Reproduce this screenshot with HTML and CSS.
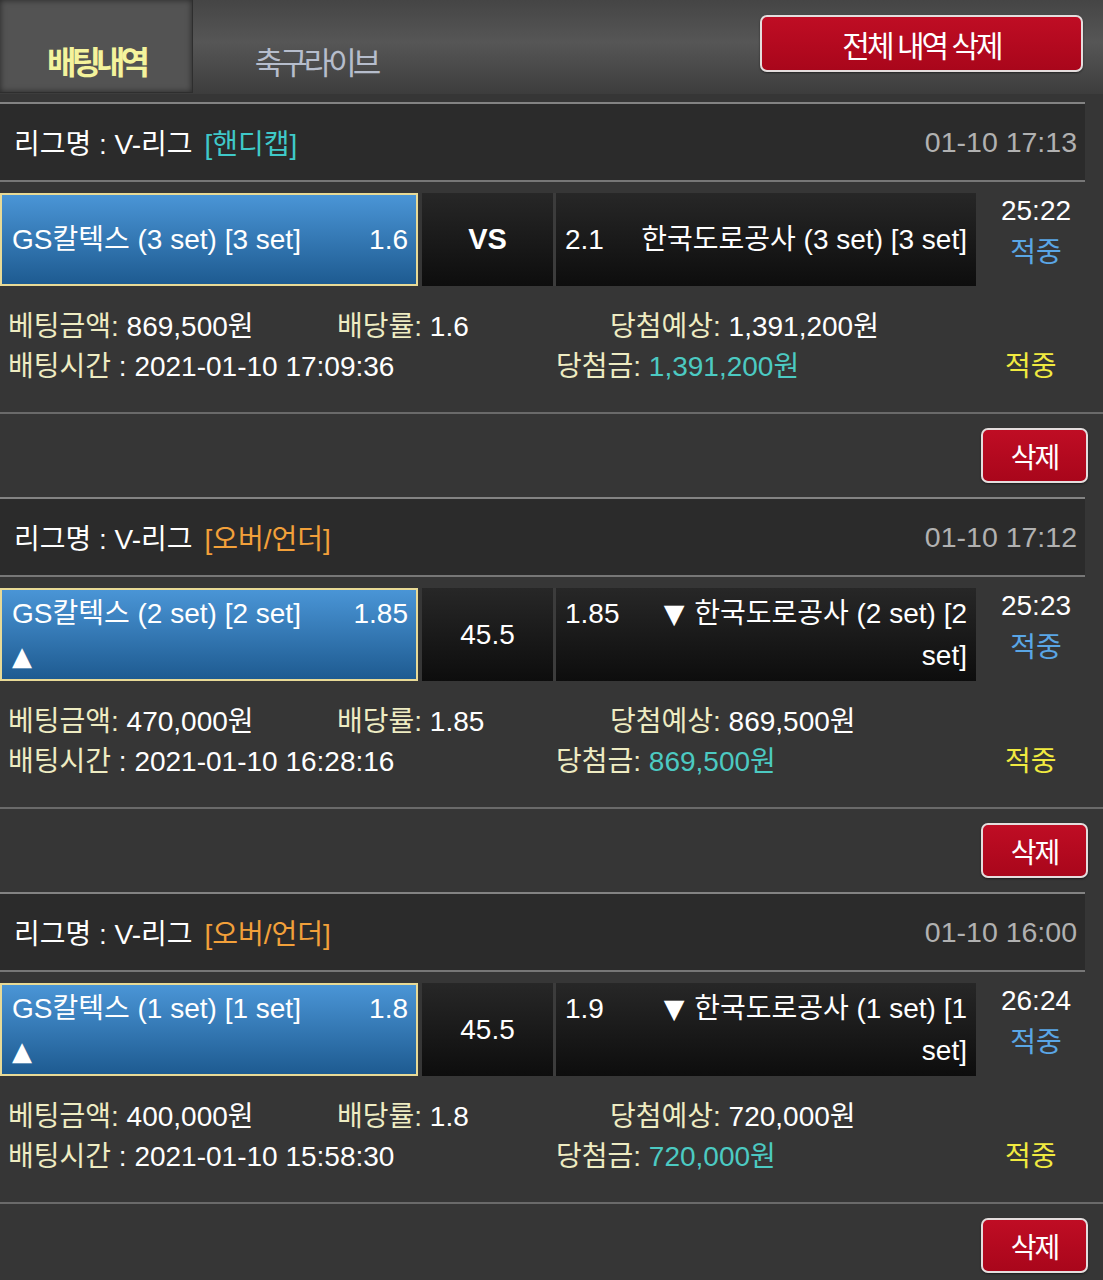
FILE: index.html
```html
<!DOCTYPE html>
<html>
<head lang="ko">
    <meta charset="UTF-8">
    <title>배팅내역</title>
    <link rel="stylesheet" href="styles.css">
</head>
<body>

<div class="top-bar">
    <div class="tabs">
        <a href="javascript:void(0);" class="tab tab-on">배팅내역</a>
        <a href="javascript:void(0);" class="tab">축구라이브</a>
    </div>
    <a href="javascript:void(0);" class="btn-red btn-all">전체 내역 삭제</a>
</div>

<!-- 1 -->
<div class="bet">
    <div class="bet-head">
        <span class="league">리그명 : V-리그 <em class="tag tag-handi">[핸디캡]</em></span>
        <span class="date">01-10 17:13</span>
    </div>
    <div class="match">
        <div class="home">
            <div class="cell-text"><span class="odds">1.6</span>GS칼텍스 (3 set) [3 set]</div>
        </div>
        <div class="mid mid-vs">VS</div>
        <div class="away">
            <div class="cell-text"><span class="odds">2.1</span>한국도로공사 (3 set) [3 set]</div>
        </div>
        <div class="state">
            <div>25:22</div>
            <div class="hit-blue">적중</div>
        </div>
    </div>
    <div class="info">
        <div class="info-row row-a">
            <div><span class="lbl">베팅금액:</span> 869,500원</div>
            <div><span class="lbl">배당률:</span> 1.6</div>
            <div><span class="lbl">당첨예상:</span> 1,391,200원</div>
        </div>
        <div class="info-row row-b">
            <div><span class="lbl">배팅시간</span> : 2021-01-10 17:09:36</div>
            <div><span class="lbl">당첨금:</span> <span class="win">1,391,200원</span></div>
            <div class="hit-yellow">적중</div>
        </div>
    </div>
    <div class="bet-foot">
        <a href="javascript:void(0);" class="btn-red btn-del">삭제</a>
    </div>
</div>

<!-- 2 -->
<div class="bet">
    <div class="bet-head">
        <span class="league">리그명 : V-리그 <em class="tag tag-ou">[오버/언더]</em></span>
        <span class="date">01-10 17:12</span>
    </div>
    <div class="match">
        <div class="home">
            <div class="cell-text"><span class="odds">1.85</span>GS칼텍스 (2 set) [2 set]<span class="arrow">▲</span></div>
        </div>
        <div class="mid">45.5</div>
        <div class="away">
            <div class="cell-text"><span class="odds">1.85</span><span class="arrow-in">▼</span> 한국도로공사 (2 set) [2 set]</div>
        </div>
        <div class="state">
            <div>25:23</div>
            <div class="hit-blue">적중</div>
        </div>
    </div>
    <div class="info">
        <div class="info-row row-a">
            <div><span class="lbl">베팅금액:</span> 470,000원</div>
            <div><span class="lbl">배당률:</span> 1.85</div>
            <div><span class="lbl">당첨예상:</span> 869,500원</div>
        </div>
        <div class="info-row row-b">
            <div><span class="lbl">배팅시간</span> : 2021-01-10 16:28:16</div>
            <div><span class="lbl">당첨금:</span> <span class="win">869,500원</span></div>
            <div class="hit-yellow">적중</div>
        </div>
    </div>
    <div class="bet-foot">
        <a href="javascript:void(0);" class="btn-red btn-del">삭제</a>
    </div>
</div>

<!-- 3 -->
<div class="bet">
    <div class="bet-head">
        <span class="league">리그명 : V-리그 <em class="tag tag-ou">[오버/언더]</em></span>
        <span class="date">01-10 16:00</span>
    </div>
    <div class="match">
        <div class="home">
            <div class="cell-text"><span class="odds">1.8</span>GS칼텍스 (1 set) [1 set]<span class="arrow">▲</span></div>
        </div>
        <div class="mid">45.5</div>
        <div class="away">
            <div class="cell-text"><span class="odds">1.9</span><span class="arrow-in">▼</span> 한국도로공사 (1 set) [1 set]</div>
        </div>
        <div class="state">
            <div>26:24</div>
            <div class="hit-blue">적중</div>
        </div>
    </div>
    <div class="info">
        <div class="info-row row-a">
            <div><span class="lbl">베팅금액:</span> 400,000원</div>
            <div><span class="lbl">배당률:</span> 1.8</div>
            <div><span class="lbl">당첨예상:</span> 720,000원</div>
        </div>
        <div class="info-row row-b">
            <div><span class="lbl">배팅시간</span> : 2021-01-10 15:58:30</div>
            <div><span class="lbl">당첨금:</span> <span class="win">720,000원</span></div>
            <div class="hit-yellow">적중</div>
        </div>
    </div>
    <div class="bet-foot">
        <a href="javascript:void(0);" class="btn-red btn-del">삭제</a>
    </div>
</div>

</body>
</html>
```

FILE: styles.css
```css
html, body, div, span, a, em {
    padding: 0px;
    margin: 0px;
}

body {
    background: #363636;
    color: #ffffff;
    font-family: "Liberation Sans", "Noto Sans CJK KR", sans-serif;
    font-size: 28px;
}

a {
    text-decoration: none;
    color: #ffffff;
}

em {
    font-style: normal;
}

/* 상단 탭 */
.top-bar {
    height: 94px;
    display: flex;
    justify-content: space-between;
    align-items: flex-start;
    background: linear-gradient(#454545, #565656 45%, #3d3d3d);
    margin-bottom: 8px;
}

.tabs {
    display: flex;
    height: 93px;
}

.tab {
    display: flex;
    align-items: flex-end;
    justify-content: center;
    height: 93px;
    box-sizing: border-box;
    padding-bottom: 9px;
    line-height: 40px;
    font-size: 31px;
    letter-spacing: -4px;
    color: #b6bdcc;
    width: 246px;
}

.tab-on {
    width: 193px;
    background: #535353;
    box-shadow: inset 0px 0px 6px rgba(0, 0, 0, 0.55);
    border-right: 1px solid #2e2e2e;
    border-bottom: 1px solid #2e2e2e;
    color: #f4f39c;
    font-weight: bold;
    font-size: 32px;
    letter-spacing: -5px;
}

.btn-red {
    display: flex;
    align-items: center;
    justify-content: center;
    box-sizing: border-box;
    background: linear-gradient(#bf0d24, #a9061b);
    border: 2px solid #e4dddd;
    border-radius: 7px;
    box-shadow: 0px 1px 2px rgba(0, 0, 0, 0.5);
    color: #ffffff;
}

.btn-all {
    width: 323px;
    height: 57px;
    margin: 15px 20px 0px 0px;
    font-size: 30px;
    letter-spacing: -3px;
}

/* 배팅 카드 */
.bet-head {
    margin-right: 18px;
    height: 76px;
    display: flex;
    justify-content: space-between;
    align-items: center;
    background: #2b2b2b;
    border-top: 2px solid #838383;
    border-bottom: 2px solid #777777;
    padding: 0px 8px 0px 14px;
}

.tag-handi {
    color: #3fc9c9;
    margin-left: 4px;
}

.tag-ou {
    color: #f2a03a;
    margin-left: 4px;
}

.date {
    color: #b1b1b1;
    font-size: 28.5px;
}

.match {
    display: flex;
    height: 93px;
    margin-top: 11px;
}

.home {
    width: 418px;
    box-sizing: border-box;
    border: 2px solid #e8da96;
    background: linear-gradient(#4a95d6, #1e5b91);
    padding: 0px 8px 0px 10px;
    display: flex;
    align-items: center;
    margin-right: 4px;
}

.cell-text {
    width: 100%;
    line-height: 42px;
}

.home .odds {
    float: right;
}

.arrow {
    display: block;
    font-family: "DejaVu Sans", sans-serif;
    font-size: 26px;
    line-height: 42px;
}

.arrow-in {
    font-family: "DejaVu Sans", sans-serif;
    font-size: 27px;
    margin-right: 2px;
}

.mid {
    width: 131px;
    display: flex;
    align-items: center;
    justify-content: center;
    background: linear-gradient(#272727, #0d0d0d);
    border-right: 3px solid #3c3c3c;
}

.mid-vs {
    font-weight: bold;
    font-size: 29px;
}

.away {
    width: 420px;
    box-sizing: border-box;
    padding: 0px 9px;
    display: flex;
    align-items: center;
    background: linear-gradient(#272727, #0d0d0d);
    text-align: right;
}

.away .odds {
    float: left;
    width: 62px;
    text-align: left;
}

.state {
    flex: 1;
    text-align: center;
    line-height: 42px;
    margin-top: -3px;
    padding-right: 7px;
}

.hit-blue {
    color: #5aa6e6;
}

/* 상세 정보 */
.info {
    padding: 21px 0px 25px 8px;
    line-height: 40px;
    border-bottom: 2px solid #6a6a6a;
}

.info-row {
    display: grid;
}

.row-a {
    grid-template-columns: 329px 273px 1fr;
}

.row-b {
    grid-template-columns: 548px 449px 1fr;
}

.lbl {
    color: #eeecc2;
}

.win {
    color: #4ccac2;
}

.hit-yellow {
    color: #f1ea40;
}

.bet-foot {
    height: 83px;
    display: flex;
    justify-content: flex-end;
    align-items: flex-start;
}

.btn-del {
    width: 107px;
    height: 55px;
    margin: 14px 15px 0px 0px;
    font-size: 28px;
    letter-spacing: -2px;
}
```
